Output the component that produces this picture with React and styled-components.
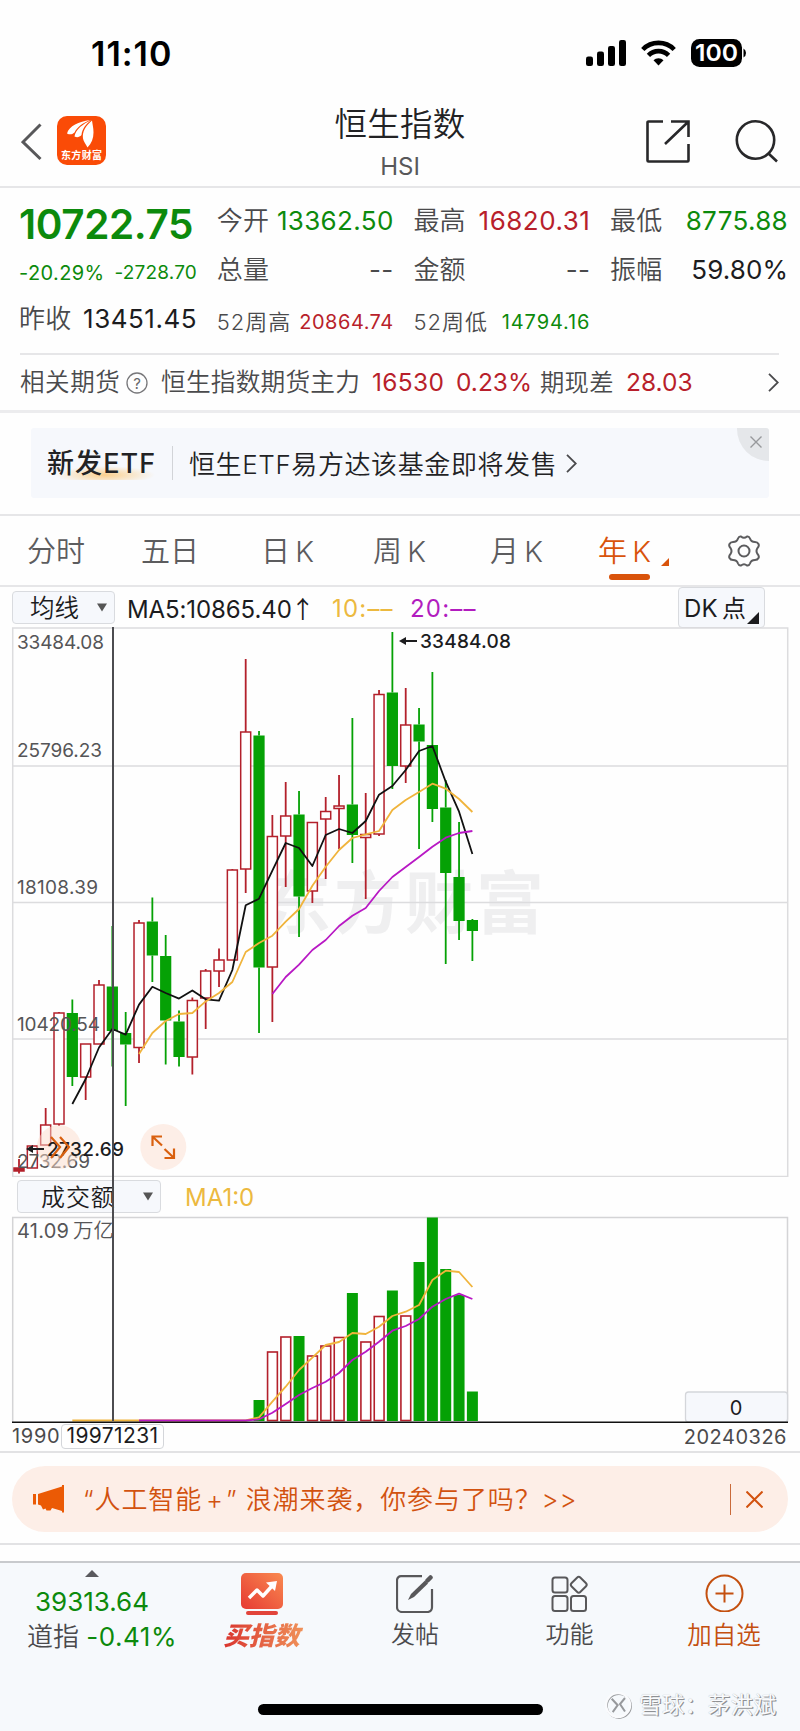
import React from 'react';
import styled, { createGlobalStyle } from 'styled-components';

const GREEN = '#0c8a0c';
const RED = '#b81f2b';
const ORANGE = '#d9530b';
const FONT = 'Inter, "Noto Sans CJK SC", sans-serif';

const GlobalStyle = createGlobalStyle`
  * { box-sizing: border-box; }
  body {
    margin: 0;
    background: #fefefe;
    font-family: ${FONT};
    color: #4a4a4c;
  }
  svg { display: block; flex: none; }
  svg text { font-family: ${FONT}; }
`;

const Page = styled.div`
  width: 800px;
  height: 1731px;
  overflow: hidden;
  display: flex;
  flex-direction: column;
  background: #fefefe;
`;

const Text = styled.span`
  font-size: ${(p) => p.$size || 24}px;
  font-weight: ${(p) => p.$weight || 400};
  letter-spacing: ${(p) => p.$gap || 0}px;
  color: ${(p) => p.$color || 'inherit'};
  padding-top: ${(p) => p.$drop || 0}px;
  white-space: nowrap;
  line-height: 1;
`;

/* ---------- status bar and title ---------- */

const StatusBar = styled.div`
  height: 106px;
  padding: 0 54px 0 91px;
  display: flex;
  align-items: center;
  justify-content: space-between;
  color: #000;
`;

const StatusIcons = styled.div`
  display: flex;
  align-items: center;
  gap: 15px;
`;

const Header = styled.header`
  height: 82px;
  padding: 0 21px;
  display: grid;
  grid-template-columns: 200px 1fr 200px;
  border-bottom: 2px solid #e6e6e8;
`;

const HeaderSide = styled.div`
  display: flex;
  gap: ${(p) => p.$gap}px;
  justify-content: ${(p) => p.$align || 'flex-start'};
  padding-top: ${(p) => p.$top}px;
`;

const HeaderTitle = styled.div`
  display: flex;
  flex-direction: column;
  align-items: center;
  gap: 13px;
  padding-top: 3px;
`;

/* ---------- quote ---------- */

const Quote = styled.section`
  height: 225px;
  padding: 8px 12px 0 19px;
  border-bottom: 3px solid #ececee;
`;

const QuoteGrid = styled.div`
  height: 158px;
  display: grid;
  grid-template-columns: 178px 177px 177px 178px;
  grid-auto-rows: 49px;
  column-gap: 19.7px;
  margin-bottom: -1px;
`;

const QuoteCell = styled.div`
  display: flex;
  align-items: center;
  justify-content: space-between;
  padding-top: ${(p) => (p.$small ? 6 : 1)}px;
`;

const Related = styled.div`
  height: 57px;
  margin: 0 9px 0 1px;
  border-top: 2px solid #e6e6e8;
  display: grid;
  grid-template-columns: 106px 35px 211px 84px 84px 86px 142px auto;
  align-items: center;
`;

/* ---------- banner ---------- */

const Banner = styled.section`
  height: 70px;
  margin: 15px 31px 16px;
  padding-left: 16px;
  background: #f6f8fc;
  border-radius: 3px;
  position: relative;
  display: flex;
  align-items: center;
`;

const BannerTag = styled.div`
  width: 126px;
  height: 34px;
  padding-top: 4px;
  line-height: 1;
  border-right: 1.5px solid #d2d4d8;
  background: radial-gradient(50px 9px at 58px 29px, #fbd08e, rgba(251, 208, 142, 0) 100%);
`;

const BannerText = styled(Text)`
  margin: 0 9px 0 16px;
`;

const BannerClose = styled.div`
  position: absolute;
  top: 0;
  right: 0;
  width: 32px;
  height: 33px;
  padding: 8px 0 0 13px;
  background: #e5e7ea;
  border-radius: 0 3px 0 32px;
`;

/* ---------- tabs ---------- */

const Tabs = styled.nav`
  height: 73px;
  border-top: 2px solid #e6e6e8;
  border-bottom: 2px solid #e6e6e8;
  padding: 0 40px 0 27px;
  display: grid;
  grid-template-columns: 114px 120px 112px 117px 108px 129px 1fr;
  align-items: center;
`;

const Tab = styled.div`
  color: ${(p) => (p.$active ? ORANGE : '#5c5c5e')};
  height: 69px;
  padding-top: 21px;
  display: flex;
  gap: 10px;
  position: relative;
  white-space: nowrap;
  word-spacing: -3px;

  &::after {
    content: '';
    display: ${(p) => (p.$active ? 'block' : 'none')};
    position: absolute;
    left: 11px;
    bottom: 5px;
    width: 41px;
    height: 6px;
    border-radius: 3px;
    background: ${ORANGE};
  }
`;

/* ---------- chart ---------- */

const Indicators = styled.div`
  height: 40px;
  padding: 0 35px 0 12px;
  display: grid;
  grid-template-columns: 115px 205px 78px 1fr 87px;
  align-items: center;
`;

const Picker = styled.div`
  width: ${(p) => p.$width}px;
  height: ${(p) => p.$height || 33}px;
  padding: 0 7px 0 ${(p) => p.$left}px;
  border: 1.5px solid #d9dbdf;
  border-radius: 4px;
  background: #f6f8fc;
  color: #1c1c1e;
  display: flex;
  align-items: center;
  justify-content: space-between;
  word-spacing: -3px;
  position: relative;
`;

const PickerCorner = styled.div`
  position: absolute;
  right: 5px;
  bottom: 3px;
`;

const Arrow = styled.span`
  font-family: "Noto Sans CJK SC", sans-serif;
  margin-left: -1px;
`;

const ChartArea = styled.section`
  height: 826px;
  position: relative;
  border-bottom: 2px solid #e2e2e4;
`;

const VolumeHead = styled.div`
  height: 39px;
  padding-left: 17px;
  display: flex;
  align-items: center;
  gap: 24px;
`;

const Crosshair = styled.div`
  position: absolute;
  left: 112px;
  top: 0;
  width: 1.5px;
  height: 794px;
  background: #4c4c50;
`;

const DateRow = styled.div`
  height: 29px;
  padding: 0 13px 0 12px;
  display: flex;
  align-items: flex-start;
`;

const StartDate = styled.div`
  width: 49px;
  padding-top: 2px;
`;

const DateBadge = styled.div`
  width: 103px;
  height: 25px;
  margin-right: auto;
  border: 1.5px solid #d4d6da;
  border-radius: 4px;
  background: #fff;
  color: #1c1c1e;
  text-align: center;
  line-height: 19px;
`;

/* ---------- notice and bottom bar ---------- */

const NoticeWrap = styled.section`
  height: 92px;
  padding: 13px 12px 0;
  border-bottom: 2px solid #e2e2e4;
`;

const Notice = styled.div`
  height: 66px;
  padding: 0 25px 0 21px;
  border-radius: 33px;
  background: #fdeee7;
  color: #d2520f;
  display: flex;
  align-items: center;
`;

const NoticeText = styled(Text)`
  margin-left: 18px;
`;

const Plus = styled.span`
  margin: 0 2px 0 4px;
`;

const NoticeBar = styled.i`
  width: 1.5px;
  height: 31px;
  margin: 0 15px 0 auto;
  background: #c96a3a;
`;

const BottomBar = styled.footer`
  flex: 1;
  margin-top: 16px;
  border-top: 2px solid #c8cacd;
  background: #f6f9fc;
  position: relative;
`;

const BottomItems = styled.div`
  display: grid;
  grid-template-columns: 184px 155px 152px 157px 1fr;
`;

const BottomItem = styled.div`
  height: 92px;
  padding-top: ${(p) => p.$top || 0}px;
  display: flex;
  flex-direction: column;
  align-items: center;
  gap: ${(p) => p.$gap || 0}px;
  color: ${(p) => p.$color || '#4a4a4c'};
`;

const Market = styled.div`
  padding: 9px 0 0 20px;
  line-height: 1;
  white-space: nowrap;
`;

const BuyLabel = styled.span`
  font-size: 25.5px;
  font-weight: 900;
  font-style: italic;
  line-height: 1;
  padding: 0 4px;
  background: linear-gradient(90deg, #d8302c, #f0935a);
  -webkit-background-clip: text;
  background-clip: text;
  color: transparent;
`;

const HomeIndicator = styled.div`
  position: absolute;
  left: 258px;
  top: 141px;
  width: 285px;
  height: 10.5px;
  border-radius: 6px;
  background: #000;
`;

const Credit = styled.div`
  position: absolute;
  left: 604px;
  top: 127px;
  display: flex;
  align-items: center;
  gap: 7px;
  font-size: 22.5px;
  letter-spacing: 0.4px;
  line-height: 30px;
  color: #fafbfd;
  white-space: nowrap;
  text-shadow: 1.2px 1.2px 0.5px #8f9194, 0 0 1px #a9abae;
`;

/* ---------- data ---------- */

// [open side, y high, y body top, y body bottom, y low]
const CANDLES = [
  ['r', 1159, 1168, 1171, 1173.5],
  ['r', 1145.7, 1146, 1168, 1168],
  ['r', 1108, 1125, 1145, 1145],
  ['r', 1012, 1013, 1124, 1126],
  ['g', 999.6, 1013, 1077, 1086],
  ['r', 1044, 1044, 1077, 1100],
  ['r', 980, 985, 1044, 1044],
  ['g', 926, 986.5, 1031, 1066.5],
  ['g', 1012, 1033, 1044.5, 1106],
  ['r', 920, 923, 1047.5, 1063],
  ['g', 897.5, 921.5, 955.5, 982],
  ['g', 935, 956, 1020.5, 1064.5],
  ['g', 1010.5, 1021.5, 1057, 1066.5],
  ['r', 997.5, 1000.5, 1057, 1074.5],
  ['r', 969, 971, 998, 1029],
  ['r', 948.5, 960, 971, 987],
  ['r', 869, 870, 960, 960],
  ['r', 659, 732, 869, 893],
  ['g', 731, 735.5, 967.5, 1033],
  ['r', 815, 836.5, 967, 1022],
  ['r', 782, 816, 836, 887],
  ['g', 791, 814.5, 896.5, 937],
  ['r', 822, 822.5, 891, 903],
  ['r', 797, 811.5, 819, 879],
  ['r', 775, 806, 808.5, 849],
  ['g', 718, 804.5, 835, 863],
  ['r', 793, 834.5, 837.5, 899],
  ['r', 690, 694.5, 834, 836],
  ['g', 632, 692.5, 766, 789],
  ['r', 688, 725, 766, 783],
  ['g', 708, 724.5, 741.5, 849],
  ['g', 672, 745, 809, 822],
  ['g', 780, 807.5, 873, 964],
  ['g', 822, 877, 921, 940],
  ['g', 919, 920, 931, 961],
];

const MA5 = [1104, 1079, 1047.5, 1029, 1034.6, 1004.6, 986.8, 993, 998.6, 990.4, 999.3, 1000.7, 970, 905.3, 898.7, 870.7, 843, 848, 866, 835, 829, 833, 821, 794.7, 786, 770, 751, 746, 781.7, 811.7, 854];
const MA10 = [1054, 1033, 1021, 1014, 1013, 1001.4, 993, 982, 952, 943, 935.7, 921.7, 909, 885.7, 866.7, 850, 838, 834.3, 831, 810, 800, 792, 783.7, 788.7, 799, 812];
const MA20 = [994, 977, 964.7, 950, 940, 926, 915.7, 908, 891, 877, 867, 857, 846.7, 837.7, 833, 831];

// volume bars start at the 19th candle
const VOLUMES = [
  ['g', 1400], ['r', 1351.5], ['r', 1336.5], ['g', 1336], ['r', 1355.5], ['r', 1345.5],
  ['r', 1337], ['g', 1293], ['r', 1341.5], ['r', 1316], ['g', 1290.5], ['r', 1315.5],
  ['g', 1262], ['g', 1217.5], ['g', 1269], ['g', 1295], ['g', 1391.5],
];
const VOL_FAST = [1420.5, 1420.5, 1420.5, 1420.5, 1420.5, 1420.5, 1420.5, 1420.5, 1420.5, 1420.5, 1420.5, 1420.5, 1420.5, 1420.5, 1417.3, 1401.7, 1386.7, 1370, 1357.7, 1345, 1342, 1333, 1334, 1326.7, 1316, 1311.7, 1305, 1280, 1270.7, 1272, 1287];
const VOL_SLOW = [1420.5, 1420.5, 1420.5, 1420.5, 1420.5, 1420.5, 1420.5, 1420.5, 1420.5, 1419.3, 1412.7, 1404, 1395, 1388, 1381.7, 1373, 1360, 1351.7, 1341.7, 1330.7, 1326, 1319, 1306.7, 1299, 1293.7, 1299];

const AXIS = [
  ['33484.08', 648.5, 87], ['25796.23', 757, 85], ['18108.39', 893.6, 81],
  ['10420.54', 1031, 83], ['2732.69', 1168, 73],
];

const TABS = ['分时', '五日', '日 K', '周 K', '月 K', '年 K'];

const xAt = (i) => 19 + i * 13.335;
const toPoints = (list, start) => list.map((y, i) => `${xAt(i + start)},${y}`).join(' ');

/* ---------- pieces ---------- */

const Caret = ({ size = 9 }) => (
  <svg width={size} height={size - 1} viewBox="0 0 10 8"><path d="M0 0h10L5 8z" fill="#555" /></svg>
);

const Corner = ({ size, color }) => (
  <svg width={size} height={size} viewBox="0 0 10 10"><path d="M10 0v10H0z" fill={color} /></svg>
);

const Chevron = ({ width = 11, height = 19, color = '#4a4a4c', stroke = 1.8 }) => (
  <svg width={width} height={height} viewBox="0 0 11 19" fill="none" stroke={color} strokeWidth={stroke}>
    <path d="M1 .8l8.8 8.7L1 18.2" />
  </svg>
);

const AppLogo = () => (
  <svg width="49" height="49" viewBox="0 0 49 49">
    <rect width="49" height="49" rx="10" fill="#fa4b07" />
    <g fill="#fff">
      <path d="M33 4C22 5.500 12 10 10 17.500c3 1.500 5 1 7.500-1C20 11 26 7 33 4z" />
      <path d="M34 4.300C26 8 18.500 13.500 17.500 20.500c3 1.500 5 .5 7-1.500C25 13 29 8 34 4.300z" />
      <path d="M35 4.500c-6 5-10 11-9 18 .5 3 3 6 4.500 9 4-4 6-9 6-15 0-5-1-8-1.500-12z" />
    </g>
    <text x="4" y="43" fontSize="10" fontWeight="700" fill="#fff" textLength="41">东方财富</text>
  </svg>
);

const Cell = ({ label, value, color, small, gap }) => (
  <QuoteCell $small={small}>
    <Text $size={small ? 22 : 26} $weight={350} $gap={small ? 1 : 0.2}>{label}</Text>
    <Text $size={small ? 20 : 26} $color={color} $gap={gap || 0.35}>{value}</Text>
  </QuoteCell>
);

const PriceChart = () => (
  <svg width="800" height="550" viewBox="0 627 800 550">
    <g fill="#efeff0" fontSize="68" fontWeight="700">
      <text x="263" y="928" textLength="281">东方财富</text>
    </g>
    <g stroke="#dcdcde" strokeWidth="1.5" fill="none">
      <rect x="12.700" y="628" width="775" height="548.500" />
      <path d="M13 766h774M13 902.500h774M13 1039h774" />
    </g>
    {CANDLES.map(([kind, high, top, bottom, low], i) => {
      const x = xAt(i);
      const color = kind === 'g' ? '#05a105' : '#b3202b';
      return (
        <g key={i} stroke={color} strokeWidth="1.800">
          <path d={`M${x} ${high}V${top}M${x} ${bottom}V${low}`} />
          {kind === 'g'
            ? <rect x={x - 5.6} y={top} width="11.200" height={bottom - top} fill={color} stroke="none" />
            : <rect x={x - 5} y={top} width="10" height={bottom - top} fill={i ? '#fff' : color} strokeWidth="1.500" />}
        </g>
      );
    })}
    <g fill="none" strokeWidth="1.800" strokeLinejoin="round">
      <polyline points={toPoints(MA5, 4)} stroke="#111" />
      <polyline points={toPoints(MA10, 9)} stroke="#f0b43c" />
      <polyline points={toPoints(MA20, 19)} stroke="#b818c4" />
    </g>
    <g fill="#555557" fontSize="19">
      {AXIS.map(([label, y, width]) => (
        <text key={label} x="17" y={y} textLength={width}>{label}</text>
      ))}
    </g>
    <circle cx="59" cy="1147" r="22" fill="#fbdccb" fillOpacity=".5" />
    <circle cx="163.300" cy="1147" r="23" fill="#fdeee7" />
    <g fill="#1c1c1e" fontSize="19" fontWeight="500">
      <text x="420" y="648" textLength="91">33484.08</text>
      <text x="47" y="1156" textLength="77">2732.69</text>
      <path d="M399 641l7-4v3h11v2h-11v3z" />
      <path d="M26 1149l7-4v3h11v2h-11v3z" />
    </g>
    <g fill="none" stroke="#d9600f" strokeWidth="2.200">
      <path d="M51 1137l9 10-9 11M60 1137l9 10-9 11" />
      <path d="M152.500 1146v-9.500h9.500M153 1137l9 8.500M164.500 1149l9 8.500M174 1148.500v9.500h-9.500" />
    </g>
  </svg>
);

const VolumeChart = () => (
  <svg width="800" height="208" viewBox="0 1216 800 208">
    <path d="M12.700 1422v-204.500h774.800V1422" fill="none" stroke="#d4d4d6" strokeWidth="1.500" />
    {VOLUMES.map(([kind, top], i) => (
      kind === 'g'
        ? <rect key={i} x={xAt(i + 18) - 5.5} y={top} width="11" height={1421 - top} fill="#05a105" />
        : <rect key={i} x={xAt(i + 18) - 4.8} y={top + 0.5} width="9.800" height={1420 - top} fill="#fff" stroke="#b3202b" strokeWidth="1.600" />
    ))}
    <g fill="none" strokeWidth="1.800" strokeLinejoin="round">
      <polyline points={toPoints(VOL_FAST, 4)} stroke="#f0b43c" />
      <polyline points={toPoints(VOL_SLOW, 9)} stroke="#b818c4" />
    </g>
    <rect x="685.500" y="1392" width="102" height="30" rx="3" fill="#f6f8fc" stroke="#d4d6da" strokeWidth="1.300" />
    <text x="736" y="1414.500" fontSize="20" fill="#1c1c1e" textAnchor="middle">0</text>
    <text x="17" y="1237.500" fontSize="20" fill="#555557" textLength="52">41.09</text>
    <text x="73" y="1237.500" fontSize="20.500" fontWeight="350" fill="#555557">万亿</text>
    <path d="M12 1422.300h776" stroke="#111" strokeWidth="1.600" />
  </svg>
);

const App = () => (
  <>
    <GlobalStyle />
    <Page>
      <StatusBar>
        <Text $size={34} $weight={600} $gap={1} $drop={1}>11:10</Text>
        <StatusIcons>
          <svg width="40" height="26" viewBox="0 0 40 26">
            <rect x="0" y="16.500" width="7" height="9.500" rx="2.200" />
            <rect x="11" y="11.500" width="7" height="14.500" rx="2.200" />
            <rect x="22" y="6" width="7" height="20" rx="2.200" />
            <rect x="33" y="0" width="7" height="26" rx="2.200" />
          </svg>
          <svg width="35" height="26" viewBox="0 0 35 26" fill="none" stroke="#000" strokeWidth="4.600">
            <path d="M1.800 9.500a22 22 0 0 1 31.400 0" />
            <path d="M7.400 15.300a14.200 14.200 0 0 1 20.200 0" />
            <path d="M17.500 25.500l-5-5.200a7 7 0 0 1 10 0z" fill="#000" stroke="none" />
          </svg>
          <svg width="55" height="28" viewBox="0 0 55 28">
            <rect width="51" height="28" rx="8.500" />
            <path d="M52.500 9.500q2.500 1.500 2.500 4.500t-2.500 4.500z" />
            <text x="25.500" y="22" fontSize="23" fontWeight="600" fill="#fff" textAnchor="middle" textLength="43" lengthAdjust="spacingAndGlyphs">100</text>
          </svg>
        </StatusIcons>
      </StatusBar>

      <Header>
        <HeaderSide $gap={15} $top={10}>
          <svg width="21" height="49" viewBox="0 0 21 49" fill="none" stroke="#58585a" strokeWidth="3">
            <path d="M19.500 8.500L2 26l17.500 17" />
          </svg>
          <AppLogo />
        </HeaderSide>
        <HeaderTitle>
          <Text $size={32.5} $weight={350} $gap={0.3} $color="#222224">恒生指数</Text>
          <Text $size={24} $color="#58585a">HSI</Text>
        </HeaderTitle>
        <HeaderSide $gap={45} $top={14} $align="flex-end">
          <svg width="44" height="43" viewBox="0 0 44 43" fill="none" stroke="#28282a" strokeWidth="2.600">
            <path d="M17 1.500H2.500a1 1 0 0 0-1 1v38a1 1 0 0 0 1 1h39a1 1 0 0 0 1-1V24M25 1.500h17.500V17M42 2L19 24" />
          </svg>
          <svg width="44" height="43" viewBox="0 0 44 43" fill="none" stroke="#28282a" strokeWidth="2.600">
            <circle cx="20.500" cy="20" r="18.700" />
            <path d="M33.500 33.500l8.500 8" />
          </svg>
        </HeaderSide>
      </Header>

      <Quote>
        <QuoteGrid>
          <QuoteCell $small>
            <Text $size={40.5} $weight={600} $gap={-0.4} $drop={3}  $color={GREEN}>10722.75</Text>
          </QuoteCell>
          <Cell label="今开" value="13362.50" color={GREEN} />
          <Cell label="最高" value="16820.31" color={RED} gap={0.5} />
          <Cell label="最低" value="8775.88" color={GREEN} />
          <QuoteCell $small>
            <Text $size={20} $gap={0.4} $color={GREEN}>-20.29%</Text>
            <Text $size={19} $gap={0.2} $color={GREEN}>-2728.70</Text>
          </QuoteCell>
          <Cell label="总量" value="--" />
          <Cell label="金额" value="--" />
          <Cell label="振幅" value="59.80%" color="#1c1c1e" gap={0.1} />
          <Cell label="昨收" value="13451.45" color="#1c1c1e" gap={0.5} />
          <Cell label="52周高" value="20864.74" color={RED} small gap={0.5} />
          <Cell label="52周低" value="14794.16" color={GREEN} small gap={0.9} />
        </QuoteGrid>
        <Related>
          <Text $size={24.5} $weight={350} $gap={0.6}>相关期货</Text>
          <svg width="22" height="22" viewBox="0 0 22 22">
            <circle cx="11" cy="11" r="10" fill="none" stroke="#77777a" strokeWidth="1.300" />
            <text x="11" y="16.500" fontSize="15" fill="#66666a" textAnchor="middle">?</text>
          </svg>
          <Text $size={24.7} $weight={350} $gap={0.2}>恒生指数期货主力</Text>
          <Text $size={24.5} $gap={0.3} $color={RED}>16530</Text>
          <Text $size={24.5} $color={RED}>0.23%</Text>
          <Text $size={24.3} $weight={350} $gap={0.3}>期现差</Text>
          <Text $size={24.5} $color={RED}>28.03</Text>
          <Chevron />
        </Related>
      </Quote>

      <Banner>
        <BannerTag><Text $size={27} $weight={500} $gap={1.1} $color="#222224">新发ETF</Text></BannerTag>
        <BannerText $size={26} $weight={350} $gap={0.6} $drop={3} $color="#222224">恒生ETF易方达该基金即将发售</BannerText>
        <Chevron />
        <BannerClose>
          <svg width="12" height="12" viewBox="0 0 12 12" stroke="#97999c" strokeWidth="1.400"><path d="M.5.500l11 11M11.500.500l-11 11" /></svg>
        </BannerClose>
      </Banner>

      <Tabs>
        {TABS.map((label) => (
          <Tab key={label} $active={label === '年 K'}>
            <Text $size={29} $weight={350}>{label}</Text>
            {label === '年 K' && <HeaderSide $top={21} $gap={0}><Corner size={8} color={ORANGE} /></HeaderSide>}
          </Tab>
        ))}
        <svg width="34" height="32" viewBox="0 0 34 32" fill="none" stroke="#5c5c5e" strokeWidth="2" strokeLinejoin="round">
          <path d="M11 3.500Q12 1 14 1.500 17 4 20 1.500 22 1 23 3.500 24 7 28 7 30.500 7 31.500 9 32.500 11 30.500 13 28.500 16 30.500 19 32.500 21 31.500 23 30.500 25 28 25 24 25 23 28.500 22 31 20 30.500 17 28 14 30.500 12 31 11 28.500 10 25 6 25 3.500 25 2.500 23 1.500 21 3.500 19 5.500 16 3.500 13 1.500 11 2.500 9 3.500 7 6 7 10 7 11 3.500z" />
          <circle cx="17" cy="16" r="5.500" />
        </svg>
      </Tabs>

      <Indicators>
        <Picker $width={103} $left={17}><Text $size={24.5} $weight={350} $drop={1}>均线</Text><Caret size={10} /></Picker>
        <Text $size={24} $gap={-0.1} $drop={3} $color="#1c1c1e">MA5:10865.40<Arrow>↑</Arrow></Text>
        <Text $size={24} $gap={1.2} $drop={3} $color="#ecb93f">10:––</Text>
        <Text $size={24} $gap={1.2} $drop={3} $color="#b21cbf">20:––</Text>
        <Picker $width={87} $height={41} $left={5}>
          <Text $size={24} $gap={0.3} $drop={2}>DK 点</Text>
          <PickerCorner><Corner size={12} color="#1c1c1e" /></PickerCorner>
        </Picker>
      </Indicators>

      <ChartArea>
        <PriceChart />
        <VolumeHead>
          <Picker $width={144} $left={23}><Text $size={24} $weight={350} $gap={0.9} $drop={2}>成交额</Text><Caret size={10} /></Picker>
          <Text $size={24} $drop={3} $color="#ecb93f">MA1:0</Text>
        </VolumeHead>
        <VolumeChart />
        <DateRow>
          <StartDate><Text $size={20} $gap={0.7}>1990</Text></StartDate>
          <DateBadge><Text $size={21} $gap={0.4}>19971231</Text></DateBadge>
          <Text $size={20} $gap={0.5} $drop={3}>20240326</Text>
        </DateRow>
        <Crosshair />
      </ChartArea>

      <NoticeWrap>
        <Notice>
          <svg width="32" height="28" viewBox="0 0 32 28" fill="#eb5a05">
            <path d="M0 9h3v10.500H0zM5 9L29 1.500V0h2v27.500h-2V26l-10-3-1.500 2.500h-4l-1-2-2.500 1-2-4L5 19.500z" />
          </svg>
          <NoticeText $size={26} $weight={350} $gap={0.9} $drop={2}>“人工智能<Plus>+</Plus>” 浪潮来袭，你参与了吗？&gt;&gt;</NoticeText>
          <NoticeBar />
          <svg width="17" height="17" viewBox="0 0 17 17" stroke="#d2520f" strokeWidth="2"><path d="M.5.500l16 16M16.500.500l-16 16" /></svg>
        </Notice>
      </NoticeWrap>

      <BottomBar>
        <BottomItems>
          <BottomItem $top={7}>
            <svg width="14" height="7" viewBox="0 0 14 7"><path d="M0 7L7 0l7 7z" fill="#5a5a5e" /></svg>
            <Text $size={26} $drop={12} $color={GREEN}>39313.64</Text>
            <Market>
              <Text $size={26} $weight={350}>道指 </Text>
              <Text $size={26} $gap={0.5} $color={GREEN}>-0.41%</Text>
            </Market>
          </BottomItem>
          <BottomItem $top={10} $gap={8}>
            <svg width="42" height="42" viewBox="0 0 42 42">
              <defs>
                <linearGradient id="buy" x1="0" y1="1" x2="1" y2="0">
                  <stop offset="0" stopColor="#e63a33" /><stop offset="1" stopColor="#f98a50" />
                </linearGradient>
              </defs>
              <rect width="42" height="36" rx="5" fill="url(#buy)" />
              <rect x="5" y="38" width="32" height="4" rx="2" fill="#e2443a" />
              <path d="M8 25l8-8 6 6 9-10" stroke="#fff" strokeWidth="3.500" fill="none" strokeLinejoin="round" />
              <path d="M25 9.500l11-1.500-2 10z" fill="#fff" />
            </svg>
            <BuyLabel>买指数</BuyLabel>
          </BottomItem>
          <BottomItem $top={12} $gap={10}>
            <svg width="38" height="38" viewBox="0 0 38 38" fill="none" stroke="#58585a" strokeWidth="2.200">
              <path d="M26 1.200H5a4 4 0 0 0-4 4V32a5 5 0 0 0 5 5h26a5 5 0 0 0 4-5V14" />
              <path d="M12 25l3-6L29 5.500l3 3L18 22z" fill="#58585a" stroke="none" />
              <path d="M31.500 5.500l3-3" strokeWidth="4.500" strokeLinecap="round" />
            </svg>
            <Text $size={24} $weight={350}>发帖</Text>
          </BottomItem>
          <BottomItem $top={12} $gap={10}>
            <svg width="37" height="38" viewBox="0 0 37 38" fill="none" stroke="#58585a" strokeWidth="2">
              <rect x="1.500" y="2.500" width="15" height="15" rx="2.500" />
              <rect x="1.500" y="21" width="15" height="15" rx="2.500" />
              <rect x="20" y="21" width="15" height="15" rx="2.500" />
              <rect x="21.500" y="3.500" width="12.500" height="12.500" rx="2.500" transform="rotate(45 27.750 9.750)" />
            </svg>
            <Text $size={24} $weight={350}>功能</Text>
          </BottomItem>
          <BottomItem $top={11} $gap={11} $color="#c4500f">
            <svg width="39" height="38" viewBox="0 0 39 38" fill="none" stroke="#c4500f" strokeWidth="2">
              <circle cx="19.500" cy="19.500" r="18" /><path d="M10.500 19.500h18M19.500 10.500v18" />
            </svg>
            <Text $size={24.5} $weight={350}>加自选</Text>
          </BottomItem>
        </BottomItems>
        <HomeIndicator />
        <Credit>
          <svg width="28" height="28" viewBox="0 0 28 28" fill="none" stroke="#fafbfd" strokeWidth="2.500">
            <circle cx="14.900" cy="14.900" r="12" stroke="#97999c" strokeWidth="2" />
            <circle cx="14" cy="14" r="12" />
            <path d="M7.700 7.700l6 6.500-5 7M21 7l-5 6 5 7.500" stroke="#97999c" strokeWidth="2" />
          </svg>
          雪球：茅洪斌
        </Credit>
      </BottomBar>
    </Page>
  </>
);

export default App;
